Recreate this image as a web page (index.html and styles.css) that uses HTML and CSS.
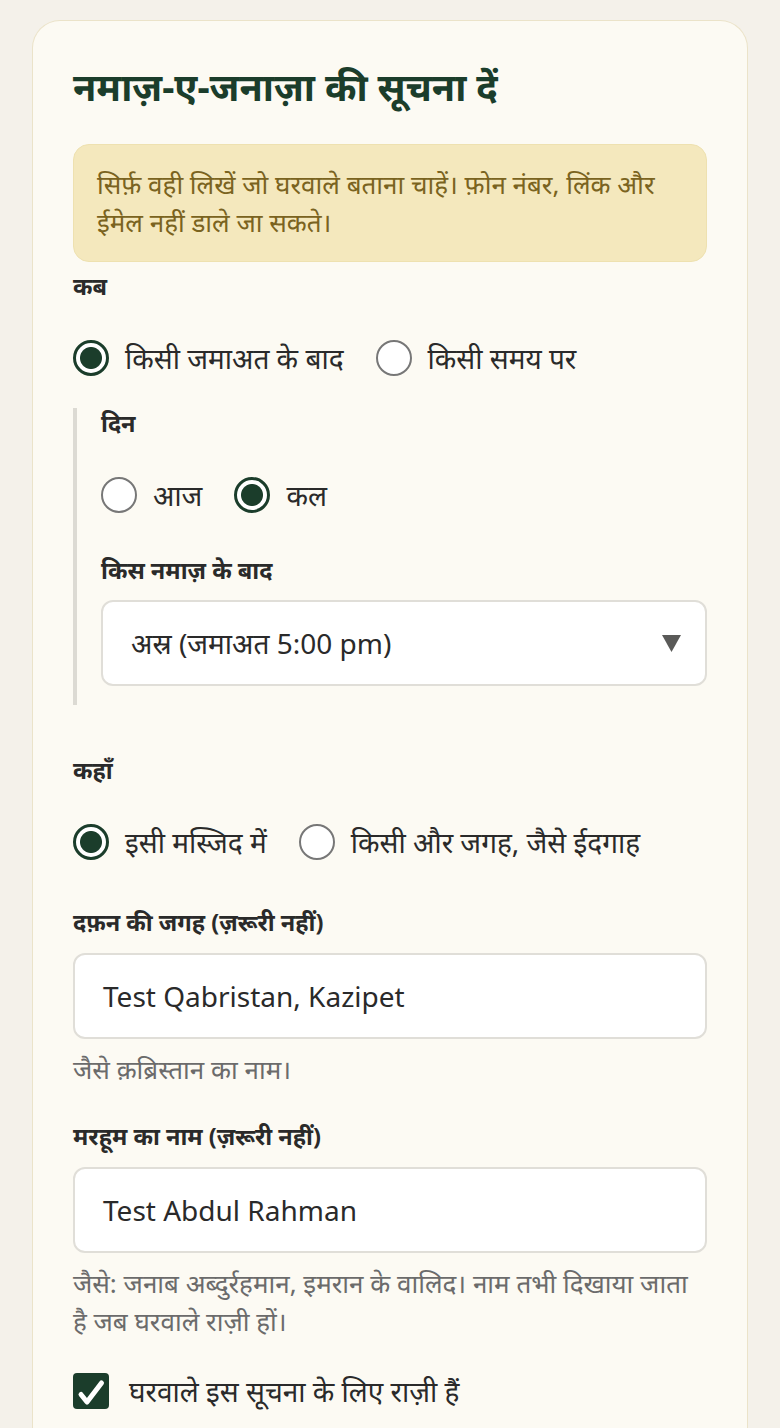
FILE: index.html
```html
<!DOCTYPE html>
<html lang="hi">
<head>
<meta charset="utf-8">
<link rel="stylesheet" href="styles.css">
</head>
<body>
<div class="page">
  <form class="card">
    <h1 class="title">नमाज़-ए-जनाज़ा की सूचना दें</h1>
    <div class="note">सिर्फ़ वही लिखें जो घरवाले बताना चाहें। फ़ोन नंबर, लिंक और ईमेल नहीं डाले जा सकते।</div>

    <div class="label label-when">कब</div>
    <div class="radios">
      <label class="radio"><span class="dot on"></span><span>किसी जमाअत के बाद</span></label>
      <label class="radio"><span class="dot"></span><span>किसी समय पर</span></label>
    </div>

    <div class="nested">
      <div class="label label-day">दिन</div>
      <div class="radios">
        <label class="radio"><span class="dot"></span><span>आज</span></label>
        <label class="radio"><span class="dot on"></span><span>कल</span></label>
      </div>
      <div class="label label-prayer">किस नमाज़ के बाद</div>
      <div class="select"><span>अस्र (जमाअत 5:00 pm)</span><svg class="arrow" viewBox="0 0 19 17" width="19" height="17"><polygon points="0,0 19,0 9.5,17" fill="#5a5a58"/></svg></div>
    </div>

    <div class="label label-where">कहाँ</div>
    <div class="radios">
      <label class="radio"><span class="dot on"></span><span>इसी मस्जिद में</span></label>
      <label class="radio"><span class="dot"></span><span>किसी और जगह, जैसे ईदगाह</span></label>
    </div>

    <div class="label label-burial">दफ़न की जगह (ज़रूरी नहीं)</div>
    <div class="input">Test Qabristan, Kazipet</div>
    <div class="help">जैसे क़ब्रिस्तान का नाम।</div>

    <div class="label label-name">मरहूम का नाम (ज़रूरी नहीं)</div>
    <div class="input">Test Abdul Rahman</div>
    <div class="help">जैसे: जनाब अब्दुर्रहमान, इमरान के वालिद। नाम तभी दिखाया जाता है जब घरवाले राज़ी हों।</div>

    <label class="check-row">
      <span class="check"><svg viewBox="0 0 36 36" width="36" height="36"><path d="M8 21.5l6 7.5 14.5-19" fill="none" stroke="#fff" stroke-width="5" stroke-linecap="round" stroke-linejoin="round"/></svg></span>
      <span>घरवाले इस सूचना के लिए राज़ी हैं</span>
    </label>
  </form>
</div>
</body>
</html>
```

FILE: styles.css
```css
html, body {
  margin: 0;
  padding: 0;
  background: #f4f1ea;
}
body {
  font-family: "Noto Sans", "Open Sans", sans-serif;
  color: #2a2a2a;
}
.page {
  padding: 20px 32px 0;
}
.card {
  display: block;
  background: #fcfaf3;
  border: 1px solid #ebe3c9;
  border-bottom: none;
  border-radius: 28px 28px 0 0;
  padding: 39px 40px 40px;
  min-height: 1420px;
  box-sizing: border-box;
}
.title {
  margin: 0;
  font-size: 38px;
  line-height: 52px;
  font-weight: 700;
  color: #1b3d2b;
}
.note {
  margin-top: 32px;
  background: #f4e8bd;
  border: 1px solid #eee1b0;
  border-radius: 16px;
  padding: 20px 23px;
  font-size: 26px;
  line-height: 38px;
  color: #7a6320;
}
.label {
  font-size: 23.5px;
  font-weight: 700;
  color: #2a2a2a;
  line-height: 30px;
}
.label-when { margin-top: 9px; }
.label-day { margin-top: 0; }
.label-prayer { margin-top: 40px; }
.label-where { margin-top: 50px; }
.label-burial { margin-top: 45px; }
.label-name { margin-top: 33px; }
.radios {
  display: flex;
  gap: 32px;
  margin-top: 37px;
}
.nested {
  border-left: 4px solid #dcdad3;
  padding: 0 0 19px 24px;
  margin-top: 30px;
}
.radio {
  display: flex;
  align-items: center;
  gap: 16px;
  font-size: 28px;
  color: #2a2a2a;
  line-height: 40px;
}
.dot {
  width: 36px;
  height: 36px;
  border-radius: 50%;
  border: 2px solid #777;
  background: #fff;
  box-sizing: border-box;
  flex: none;
}
.dot.on {
  border: 3px solid #1b3d2b;
  background: radial-gradient(circle, #1b3d2b 0 10.5px, #fff 11.5px);
}
.select {
  margin-top: 15px;
  display: flex;
  justify-content: space-between;
  align-items: center;
  height: 86px;
  box-sizing: border-box;
  background: #fff;
  border: 2px solid #e0ded8;
  border-radius: 12px;
  padding: 0 24px 0 28px;
  font-size: 28px;
  color: #2a2a2a;
}
.arrow {
  flex: none;
  display: block;
}
.input {
  margin-top: 16px;
  height: 86px;
  box-sizing: border-box;
  display: flex;
  align-items: center;
  background: #fff;
  border: 2px solid #e0ded8;
  border-radius: 12px;
  padding: 0 28px;
  font-size: 28px;
  color: #2a2a2a;
}
.help {
  margin-top: 11px;
  font-size: 26px;
  line-height: 38px;
  color: #6b6b6b;
}
.check-row {
  display: flex;
  align-items: center;
  gap: 20px;
  margin-top: 31px;
  font-size: 28px;
  line-height: 40px;
}
.check {
  width: 36px;
  height: 36px;
  border-radius: 4px;
  background: #1b3d2b;
  display: flex;
  align-items: center;
  justify-content: center;
  flex: none;
}
.check svg {
  display: block;
}
```
